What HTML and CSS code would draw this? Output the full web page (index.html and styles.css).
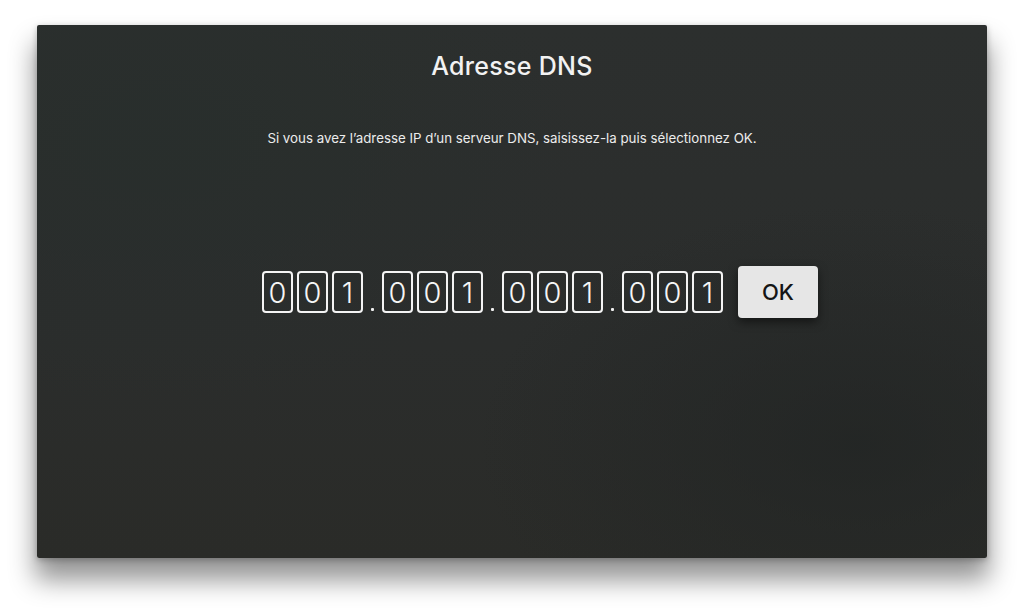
FILE: index.html
```html
<!DOCTYPE html>
<html lang="fr">
<head>
<meta charset="utf-8">
<title>Adresse DNS</title>
<link rel="stylesheet" href="styles.css">
</head>
<body>
<main class="screen">
  <h1 class="title">Adresse DNS</h1>
  <p class="hint">Si vous avez l’adresse IP d’un serveur DNS, saisissez-la puis sélectionnez OK.</p>
  <div class="entry">
    <div class="octet"><span class="digit">0</span><span class="digit">0</span><span class="digit">1</span></div>
    <span class="sep"><i class="dot"></i></span>
    <div class="octet"><span class="digit">0</span><span class="digit">0</span><span class="digit">1</span></div>
    <span class="sep"><i class="dot"></i></span>
    <div class="octet"><span class="digit">0</span><span class="digit">0</span><span class="digit">1</span></div>
    <span class="sep"><i class="dot"></i></span>
    <div class="octet"><span class="digit">0</span><span class="digit">0</span><span class="digit">1</span></div>
    <button class="ok" type="button">OK</button>
  </div>
</main>
</body>
</html>
```
FILE: styles.css
```css
html, body {
  margin: 0;
  padding: 0;
  background: #ffffff;
}

body {
  width: 1024px;
  height: 608px;
  overflow: hidden;
  padding: 25px 0 0 37px;
  box-sizing: border-box;
  font-family: Inter, "Liberation Sans", sans-serif;
}

.screen {
  width: 950px;
  height: 533px;
  box-sizing: border-box;
  border-radius: 2px;
  padding-top: 26px;
  display: flex;
  flex-direction: column;
  align-items: center;
  color: #f2f2f2;
  background:
    radial-gradient(ellipse 420px 260px at 120px 120px, rgba(40, 46, 44, 0.9), rgba(40, 46, 44, 0) 100%),
    radial-gradient(ellipse 380px 240px at 820px 420px, rgba(34, 37, 36, 0.8), rgba(34, 37, 36, 0) 100%),
    linear-gradient(180deg, #2c2f2e 0%, #2b2d2c 60%, #2a2b28 100%);
  box-shadow: 0 20px 26px 2px rgba(0, 0, 0, 0.42), 0 2px 6px rgba(0, 0, 0, 0.25);
}

.title {
  margin: 0;
  font-size: 25px;
  line-height: 30px;
  font-weight: 450;
  letter-spacing: 0.3px;
}

.hint {
  margin: 49px 0 0;
  font-size: 13.3px;
  line-height: 16px;
  font-weight: 400;
  color: #ececec;
}

.entry {
  align-self: flex-start;
  margin: 120px 0 0 225px;
  display: flex;
  align-items: center;
}

.octet {
  display: flex;
  gap: 4px;
}

.digit {
  width: 31px;
  height: 42px;
  box-sizing: border-box;
  border: 2px solid #f4f4f4;
  border-radius: 4px;
  display: flex;
  align-items: center;
  justify-content: center;
  font-size: 29px;
  font-weight: 350;
  line-height: 1;
  color: #f6f6f6;
}

.sep {
  width: 19px;
  height: 42px;
  display: flex;
  align-items: flex-end;
  justify-content: center;
  box-sizing: border-box;
  padding-bottom: 2px;
}

.dot {
  display: block;
  width: 3px;
  height: 3px;
  border-radius: 1px;
  background: #f0f0f0;
}

.ok {
  margin-left: 15px;
  width: 80px;
  height: 52px;
  border: none;
  border-radius: 4px;
  background: #e6e6e6;
  color: #151515;
  font-family: Inter, "Liberation Sans", sans-serif;
  font-size: 22px;
  font-weight: 450;
  padding: 0;
  box-shadow: 0 4px 10px rgba(0, 0, 0, 0.5);
}
```
